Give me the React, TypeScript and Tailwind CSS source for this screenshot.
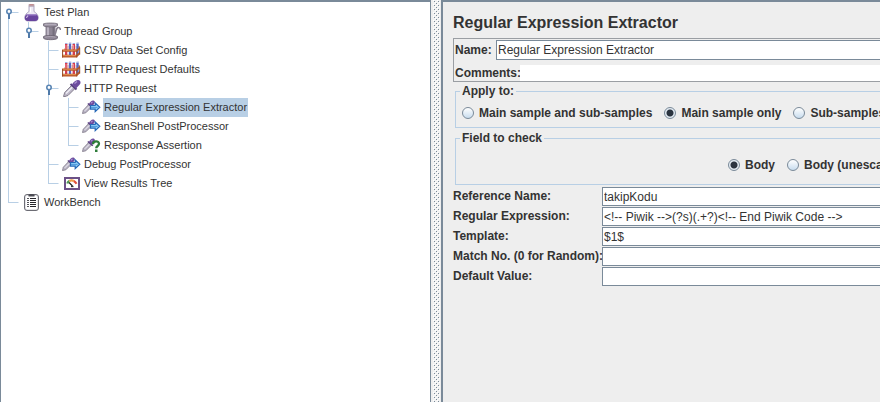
import type { ReactNode } from "react";

type GuideKind = "none" | "pass" | "tee" | "end" | "root" | "last" | "open";

type TreeNode = {
  label: string;
  icon: ReactNode;
  guides: GuideKind[];
  selected?: boolean;
};

function FlaskIcon() {
  return (
    <svg width="20" height="19" viewBox="0 0 20 19" className="shrink-0">
      <path d="M8 3v5.500C5.500 10 3.800 12.300 3.800 14.500c0 2.500 1.400 3.500 3.200 3.500h7c1.800 0 3.200-1 3.200-3.500 0-2.200-1.700-4.500-4.200-6V3z" fill="#ece8f4" stroke="#9d94b4" strokeWidth=".8" />
      <path d="M5.200 11.500h10.600c1 1.300 1.400 2.300 1.400 3.300 0 2.200-1.200 3.200-3 3.200H6.800c-1.800 0-3-1-3-3.200 0-1 .4-2 1.400-3.300z" fill="#68449e" />
      <path d="M5.500 12h10" stroke="#9a7cc8" />
      <path d="M5.500 15c.2-1 .8-1.700 1.600-2.200" stroke="#cdbbe6" strokeWidth="1.200" fill="none" />
      <path d="M9.500 4.500v5" stroke="#fff" strokeWidth="1.200" />
      <rect x="7.500" y="1" width="6" height="2.500" rx="1" fill="#b9a6b0" />
      <path d="M8.500 1.800h4" stroke="#c98686" />
    </svg>
  );
}

function SpoolIcon() {
  return (
    <svg width="20" height="19" viewBox="0 0 20 19" className="shrink-0">
      <path d="M13 13.500c2.500-1 1.500-7.500 4-8 1.300-.2 2.300.8 2.500 2.500" fill="none" stroke="#847c8b" strokeWidth="1.600" />
      <path d="M4.500 4h10v10.500h-10z" fill="#8d8594" />
      <path d="M7 5v9.500" stroke="#b9b2c0" strokeWidth="2" />
      <path d="M12.500 5v9" stroke="#756e7c" strokeWidth="2" />
      <path d="M2.500 1.800c2-1 12-1 14 0v2c-1 1.500-13 1.500-14 0z" fill="#9b93a2" stroke="#6d6674" strokeWidth=".8" />
      <path d="M4 2.300h11" stroke="#c0bac6" strokeWidth=".8" />
      <path d="M2.500 14.500c1-1.300 13-1.300 14 0v1.700c-1.500 2-12.500 2-14 0z" fill="#8f8796" stroke="#68616f" strokeWidth=".8" />
      <path d="M4 15.200c3-.8 8-.8 10.500 0" stroke="#b7b0bd" strokeWidth=".8" fill="none" />
    </svg>
  );
}

function RackIcon() {
  return (
    <svg width="20" height="19" viewBox="0 0 20 19" className="shrink-0">
      <path d="M3 8l3-3h13v3l-3 2H3z" fill="#d9a07a" />
      <path d="M4 3h2.500v11H4zM11.500 3H14v11h-2.500z" fill="#d63c50" />
      <path d="M7.800 2.500h2.400v11.500H7.800zM15.300 2.500h2.400v11h-2.400z" fill="#5468c4" />
      <path d="M7 4v9.500M10.800 4v9.500M14.700 4v9" stroke="#f0eef6" strokeWidth=".9" />
      <path d="M4 2.500h2.500M8 2h2.300M11.600 2.500H14M15.500 2h2.300" stroke="#a4b2e0" />
      <path d="M5 4v4M12.500 4v4" stroke="#f0a0a8" strokeWidth=".8" />
      <path d="M1 8.500h14.500l3.500-2.500v2L16 10.800H1z" fill="#bb5a2a" />
      <path d="M1 13.800h14.500l3.500-3v2.500l-3.500 3.200H1z" fill="#bb5a2a" />
      <path d="M1.500 9.200H15.500M1.500 14.600H15.500" stroke="#ea9e5c" strokeWidth=".8" />
      <path d="M1.600 9v7.500M15.800 9.500v7M18.700 6.500v7" stroke="#984a26" strokeWidth="1" />
    </svg>
  );
}

function DropperIcon() {
  return (
    <svg width="20" height="19" viewBox="0 0 20 19" className="shrink-0">
      <path d="M2.500 17.500l1.200-4L11 6l3.500 3-7.500 7.500-3 1z" fill="#bdb8c8" stroke="#7b7484" strokeWidth=".9" />
      <path d="M5 14.500L12 7.500" stroke="#f3f1f7" strokeWidth="1.300" />
      <path d="M9.500 5l6 5.500" stroke="#59427e" strokeWidth="2" />
      <path d="M11 5.500C12.500 3 14.500.8 17 .9c2.700.2 3.300 3 1.500 4.900L15 9.500z" fill="#6d4c9e" />
      <path d="M13.500 4.500l2.500-2" stroke="#ad94d2" strokeWidth="1.500" />
    </svg>
  );
}

function SmallDropper() {
  return (
    <>
      <path d="M1.500 15.500l.8-3.300L8 6.200l2.800 2.600-6 6z" fill="#bdb8c8" stroke="#7b7484" strokeWidth=".8" />
      <path d="M3.800 12.800l4.500-4.500" stroke="#efedf4" />
      <path d="M6.800 5.500l5 4.300" stroke="#59427e" strokeWidth="1.500" />
      <path d="M8 5.700c1.200-1.700 2.700-3.600 4.500-3.200 1.700.5 1.700 2.300.6 3.600L11 8.700z" fill="#6d4c9e" />
      <path d="M10 5.200l1.500-1.300" stroke="#ad94d2" strokeWidth="1.200" />
    </>
  );
}

function PostProcessorIcon() {
  return (
    <svg width="20" height="19" viewBox="0 0 20 19" className="shrink-0">
      <SmallDropper />
      <path d="M9.500 7.500h4.700V5l4.600 4.300-4.600 4.400v-2.500H9.500z" fill="#8fd0f8" stroke="#2668b8" strokeWidth="1.200" />
      <path d="M10 9.400h6.500" stroke="#3a86d0" strokeWidth=".8" />
    </svg>
  );
}

function AssertionIcon() {
  return (
    <svg width="20" height="19" viewBox="0 0 20 19" className="shrink-0">
      <SmallDropper />
      <path d="M12 8.300c0-4 6-3.800 6-.5 0 2.200-2.800 2.200-2.800 4.500" fill="none" stroke="#2f7d3a" strokeWidth="2.300" />
      <rect x="14" y="13.500" width="2.500" height="2.500" fill="#2f7d3a" />
    </svg>
  );
}

function GaugeIcon() {
  return (
    <svg width="20" height="19" viewBox="0 0 20 19" className="shrink-0">
      <rect x="4" y="4" width="14" height="11" fill="#fff" stroke="#6c5187" strokeWidth="2" />
      <path d="M6.300 9.500c.4-1.300 1-2 2-2.500" fill="none" stroke="#4f9a54" strokeWidth="2.200" />
      <path d="M8.300 7c1.700-.9 3-.8 4.500 0" fill="none" stroke="#ee9c46" strokeWidth="2.200" />
      <path d="M12.800 7c1.300.8 2 1.500 2.700 2.800" fill="none" stroke="#e0503c" strokeWidth="2.200" />
      <path d="M8 8.500l3.500 3.500" stroke="#222" strokeWidth="1.300" />
      <path d="M10 12.500h2.500" stroke="#333" strokeWidth="1.300" />
    </svg>
  );
}

function ClipboardIcon() {
  return (
    <svg width="20" height="19" viewBox="0 0 20 19" className="shrink-0">
      <rect x="3.500" y="1.500" width="14" height="16" rx="2.500" fill="#e4e4e8" stroke="#6c6c74" />
      <rect x="5" y="3" width="11" height="13" fill="#fff" />
      <path d="M7.500 3.500V2.200c0-.8.8-1.200 3-1.200s3 .4 3 1.200v1.300z" fill="#4c4c54" />
      <path d="M9 5.500h6M9 7.500h6M9 9.500h6M9 11.500h6M9 13.500h6" stroke="#26262c" />
      <path d="M6 5.500h2M6 7.500h2M6 9.500h2M6 11.500h2M6 13.500h2" stroke="#55555c" />
    </svg>
  );
}

const guidePaths: Record<GuideKind, string> = {
  none: "",
  pass: "M7.500 0v19",
  tee: "M7.500 0v19M7.500 9.500h10",
  end: "M7.500 0v10M7.500 9.500h10",
  root: "M7.500 9v10M7.500 9.500h10",
  last: "M7.500 0v9M7.500 9.500h10",
  open: "M7.500 0v19M7.500 9.500h10",
};

function Guide({ kind, label }: { kind: GuideKind; label: string }) {
  const isHandle = kind === "root" || kind === "last" || kind === "open";
  const drawing = (
    <svg width="20" height="19" viewBox="0 0 20 19" className="block">
      <path d={guidePaths[kind]} stroke="#b8cfe5" fill="none" />
      {isHandle && (
        <>
          <path d="M8 10v6" stroke="#4f79a8" strokeWidth="2" />
          <circle cx="8" cy="8.500" r="2.200" fill="#fff" stroke="#5b86b4" strokeWidth="1.600" />
        </>
      )}
    </svg>
  );

  if (isHandle) {
    return (
      <button type="button" aria-label={`Collapse ${label}`} className="shrink-0">
        {drawing}
      </button>
    );
  }
  return <span className="shrink-0">{drawing}</span>;
}

const nodes: TreeNode[] = [
  { label: "Test Plan", icon: <FlaskIcon />, guides: ["root"] },
  { label: "Thread Group", icon: <SpoolIcon />, guides: ["pass", "last"] },
  { label: "CSV Data Set Config", icon: <RackIcon />, guides: ["pass", "none", "tee"] },
  { label: "HTTP Request Defaults", icon: <RackIcon />, guides: ["pass", "none", "tee"] },
  { label: "HTTP Request", icon: <DropperIcon />, guides: ["pass", "none", "open"] },
  {
    label: "Regular Expression Extractor",
    icon: <PostProcessorIcon />,
    guides: ["pass", "none", "pass", "tee"],
    selected: true,
  },
  { label: "BeanShell PostProcessor", icon: <PostProcessorIcon />, guides: ["pass", "none", "pass", "tee"] },
  { label: "Response Assertion", icon: <AssertionIcon />, guides: ["pass", "none", "pass", "end"] },
  { label: "Debug PostProcessor", icon: <PostProcessorIcon />, guides: ["pass", "none", "tee"] },
  { label: "View Results Tree", icon: <GaugeIcon />, guides: ["pass", "none", "end"] },
  { label: "WorkBench", icon: <ClipboardIcon />, guides: ["end"] },
];

function TestTree() {
  return (
    <nav className="w-[431px] shrink-0 border-x border-t-2 border-[#7a8a99] bg-white">
      <ul role="tree" aria-label="Test plan" className="pt-px text-[11px]">
        {nodes.map((node) => (
          <li
            key={node.label}
            role="treeitem"
            aria-level={node.guides.length}
            aria-selected={!!node.selected}
            className="flex h-[19px] items-center"
          >
            {node.guides.map((kind, i) => (
              <Guide key={i} kind={kind} label={node.label} />
            ))}
            {node.icon}
            <span
              className={
                node.selected
                  ? "ml-0.5 bg-[#b8cfe5] px-px leading-[19px]"
                  : "ml-0.5 px-px leading-[19px]"
              }
            >
              {node.label}
            </span>
          </li>
        ))}
      </ul>
    </nav>
  );
}

function Splitter() {
  return (
    <div role="separator" aria-orientation="vertical" className="w-[10px] shrink-0 bg-[#eeeeee] pl-0.5">
      <svg width="8" height="100%" className="block">
        <defs>
          <pattern id="bumps" width="4" height="4" patternUnits="userSpaceOnUse">
            <rect width="4" height="4" fill="#f2f2f2" />
            <rect x="1" y="1" width="1" height="1" fill="#7a8a99" />
            <rect x="3" y="3" width="1" height="1" fill="#7a8a99" />
            <rect x="0" y="0" width="1" height="1" fill="#fff" />
            <rect x="2" y="2" width="1" height="1" fill="#fff" />
          </pattern>
        </defs>
        <rect width="7" height="100%" fill="url(#bumps)" />
      </svg>
    </div>
  );
}

function Radio({ name, label, checked }: { name: string; label: string; checked?: boolean }) {
  return (
    <label className="flex shrink-0 items-center gap-[5px]">
      <input
        type="radio"
        name={name}
        defaultChecked={checked}
        className="size-3 appearance-none rounded-full border border-[#7a8a99] bg-linear-to-b from-white to-[#c8dcee] checked:bg-[radial-gradient(circle,#2b3440_3px,#e4ecf4_4px)]"
      />
      {label}
    </label>
  );
}

const fields = [
  { id: "refname", label: "Reference Name:", value: "takipKodu" },
  { id: "regex", label: "Regular Expression:", value: "<!-- Piwik -->(?s)(.+?)<!-- End Piwik Code -->" },
  { id: "template", label: "Template:", value: "$1$" },
  { id: "match", label: "Match No. (0 for Random):", value: "" },
  { id: "default", label: "Default Value:", value: "" },
];

function ExtractorPanel() {
  return (
    <main className="min-w-0 flex-1 overflow-hidden border-t-2 border-l-2 border-[#7a8a99] bg-[#eeeeee] pt-[11px] pl-[10px] text-xs font-bold whitespace-nowrap">
      <h1 className="text-base leading-5">Regular Expression Extractor</h1>

      <section className="mt-[5px] border-y border-l border-[#9a9ea3] pl-px">
        <div className="flex items-center pt-px">
          <label htmlFor="name" className="w-[41px]">
            Name:
          </label>
          <input
            id="name"
            defaultValue="Regular Expression Extractor"
            className="h-5 min-w-0 flex-1 border-y border-l border-[#7a8a99] bg-white px-px font-normal"
          />
        </div>
        <div className="mt-[5px] flex items-center">
          <label htmlFor="comments" className="w-[65px]">
            Comments:
          </label>
          <input id="comments" className="h-4 min-w-0 flex-1 bg-white px-px font-normal" />
        </div>
      </section>

      <fieldset className="mt-px ml-0.5 border-y border-l border-[#b8cfe5] pb-[7px] pl-1.5">
        <legend className="-ml-0.5 px-0.5 leading-4">Apply to:</legend>
        <div className="mt-[7px] flex h-[14px] items-center gap-3">
          <Radio name="scope" label="Main sample and sub-samples" />
          <Radio name="scope" label="Main sample only" checked />
          <Radio name="scope" label="Sub-samples only" />
        </div>
      </fieldset>

      <fieldset className="mt-0.5 ml-0.5 border-y border-l border-[#b8cfe5] pb-3 pl-1.5">
        <legend className="-ml-0.5 px-0.5 leading-4">Field to check</legend>
        <div className="mt-3 flex h-[14px] items-center gap-3 pl-[266px]">
          <Radio name="field" label="Body" checked />
          <Radio name="field" label="Body (unescaped)" />
        </div>
      </fieldset>

      <div className="mt-0.5 flex flex-col gap-px">
        {fields.map((field) => (
          <div key={field.id} className="flex">
            <label htmlFor={field.id} className="w-[149px] shrink-0 leading-[18px]">
              {field.label}
            </label>
            <input
              id={field.id}
              defaultValue={field.value}
              className="h-[19px] min-w-0 flex-1 border-y border-l border-[#7a8a99] bg-white px-px pt-px font-normal"
            />
          </div>
        ))}
      </div>
    </main>
  );
}

export default function App() {
  return (
    <div className="flex min-h-screen bg-[#eeeeee] font-['Liberation_Sans',Arial,sans-serif] text-[#333333]">
      <TestTree />
      <Splitter />
      <ExtractorPanel />
    </div>
  );
}
